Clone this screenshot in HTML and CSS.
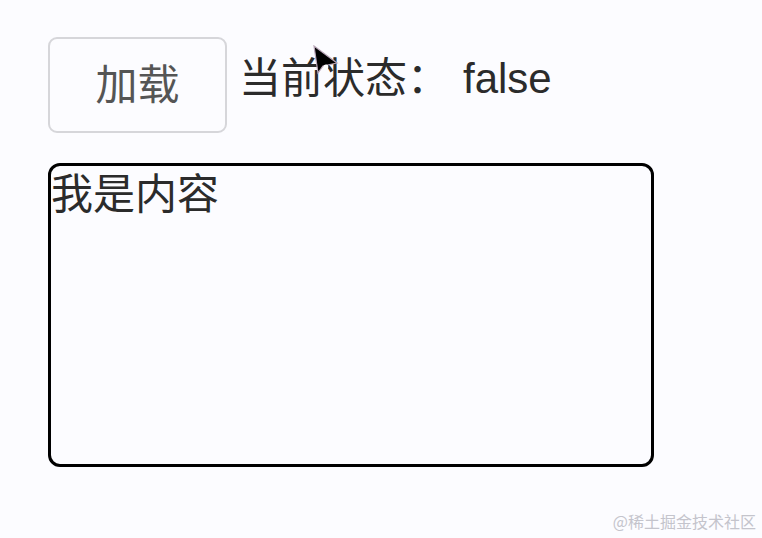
FILE: index.html
```html
<!DOCTYPE html>
<html lang="zh">
<head>
<meta charset="utf-8">
<link rel="stylesheet" href="styles.css">
</head>
<body>
<div class="page">
  <div class="toolbar">
    <button class="load-btn">加载</button>
    <span class="status">当前状态：<span class="value">false</span></span>
  </div>
  <div class="content-box">我是内容</div>
</div>
<svg class="cursor" width="30" height="32" viewBox="0 0 30 32">
  <polygon points="2,1 6,28 11,21 25,18" fill="#000" stroke="#b9a6b8" stroke-width="1.2"/>
  <circle cx="14" cy="22" r="2.4" fill="#fff"/>
</svg>
<div class="watermark">@稀土掘金技术社区</div>
</body>
</html>
```

FILE: styles.css
```css
html, body {
  margin: 0;
  padding: 0;
  background: #fcfcff;
}
body {
  width: 762px;
  height: 538px;
  position: relative;
  overflow: hidden;
  font-family: "Liberation Sans", "Noto Sans CJK SC", sans-serif;
}
.page {
  padding: 37px 0 0 48px;
}
.toolbar {
  display: flex;
  align-items: center;
  gap: 12px;
}
.load-btn {
  width: 179px;
  height: 96px;
  box-sizing: border-box;
  border: 2px solid #d6d6da;
  border-radius: 9px;
  background: #fcfcff;
  color: #555;
  font-family: "Noto Sans CJK SC", sans-serif;
  font-size: 42px;
  line-height: 1;
  padding: 0 0 6px 0;
  margin: 0;
}
.status {
  font-family: "Liberation Sans", "Noto Sans CJK SC", sans-serif;
  font-size: 42px;
  line-height: 1;
  color: #2b2b2b;
  margin-top: -12px;
}
.status .value {
  margin-left: 14px;
}
.content-box {
  margin-top: 30px;
  width: 606px;
  height: 304px;
  box-sizing: border-box;
  border: 3px solid #000;
  border-radius: 12px;
  font-family: "Noto Sans CJK SC", sans-serif;
  font-size: 42px;
  line-height: 1.2;
  color: #2b2b2b;
  padding-left: 0;
}
.cursor {
  position: absolute;
  left: 312px;
  top: 45px;
}
.watermark {
  position: absolute;
  right: 6px;
  bottom: 5px;
  font-family: "Noto Sans CJK SC", sans-serif;
  font-size: 16px;
  color: #c4c4cc;
}
```
